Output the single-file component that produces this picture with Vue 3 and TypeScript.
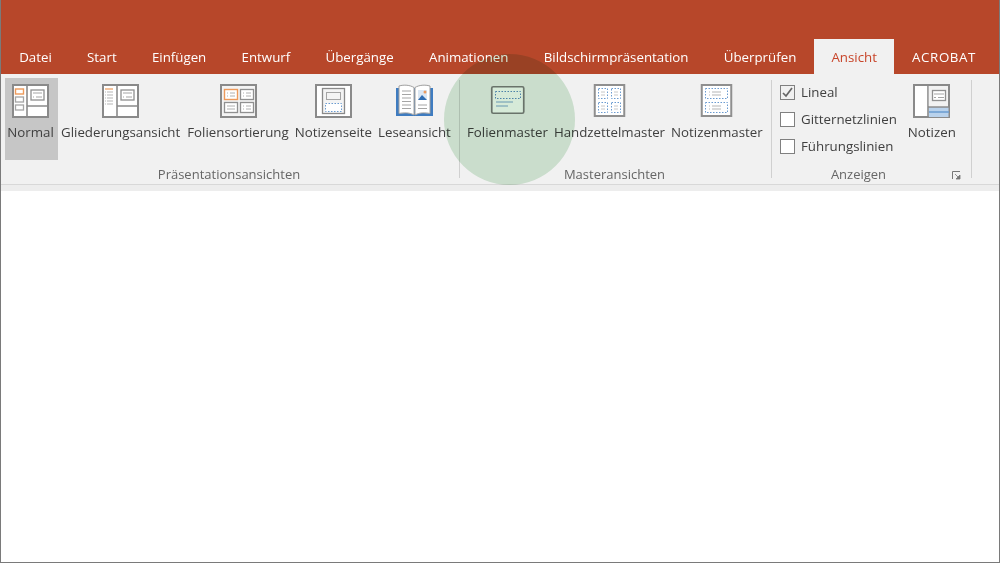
<script setup lang="ts">
const tabs = ['Datei','Start','Einfügen','Entwurf','Übergänge','Animationen','Bildschirmpräsentation','Überprüfen','Ansicht','ACROBAT']
const checks = [
  { label: 'Lineal', on: true },
  { label: 'Gitternetzlinien', on: false },
  { label: 'Führungslinien', on: false },
]
</script>

<template>
  <div class="frame">
    <header class="title">
      <nav class="tabs">
        <span v-for="t in tabs" :key="t" class="tab" :class="{ active: t === 'Ansicht', caps: t === 'ACROBAT' }">{{ t }}</span>
      </nav>
    </header>
    <section class="ribbon">
      <div class="group g1">
        <div class="body">
          <div class="btn selected">
            <svg class="icon" width="37" height="34" viewBox="0 0 37 34">
              <rect x="1" y="1" width="35" height="32" fill="#fff" stroke="#8a8a8a" stroke-width="2"/>
              <path d="M15 1v32M15 22h21" stroke="#8a8a8a" stroke-width="1.600" fill="none"/>
              <rect x="3.500" y="5" width="8" height="5" fill="#fff" stroke="#ed9a5b" stroke-width="1.400"/>
              <rect x="3.500" y="13" width="8" height="5" fill="#fff" stroke="#a5a5a5" stroke-width="1.300"/>
              <rect x="3.500" y="21" width="8" height="5" fill="#fff" stroke="#a5a5a5" stroke-width="1.300"/>
              <rect x="19" y="6" width="13" height="10" fill="#fff" stroke="#909090" stroke-width="1.300"/>
              <path d="M21 9h9M21 13h1M24 13h6" stroke="#a5a5a5"/>
            </svg>
            <span>Normal</span>
          </div>
          <div class="btn">
            <svg class="icon" width="37" height="34" viewBox="0 0 37 34">
              <rect x="1" y="1" width="35" height="32" fill="#fff" stroke="#8a8a8a" stroke-width="2"/>
              <path d="M15 1v32M15 22h21" stroke="#8a8a8a" stroke-width="1.600" fill="none"/>
              <path d="M3 5h8" stroke="#ed9a5b" stroke-width="1.200"/>
              <path d="M3 8h1M5 8h6M3 11h1M5 11h6M3 14h1M5 14h6M3 17h1M5 17h6M3 20h1M5 20h6" stroke="#b5b5b5"/>
              <rect x="19" y="6" width="13" height="10" fill="#fff" stroke="#909090" stroke-width="1.300"/>
              <path d="M21 9h9M21 13h1M24 13h6" stroke="#a5a5a5"/>
            </svg>
            <span>Gliederungsansicht</span>
          </div>
          <div class="btn shifted">
            <svg class="icon" width="37" height="34" viewBox="0 0 37 34">
              <rect x="1" y="1" width="35" height="32" fill="#f4f4f4" stroke="#8a8a8a" stroke-width="2"/>
              <rect x="4.500" y="5.500" width="13" height="10" fill="#fff" stroke="#ed9a5b" stroke-width="1.400"/>
              <rect x="20.500" y="5.500" width="13" height="10" fill="#fff" stroke="#909090" stroke-width="1.300"/>
              <rect x="4.500" y="18.500" width="13" height="10" fill="#fff" stroke="#909090" stroke-width="1.300"/>
              <rect x="20.500" y="18.500" width="13" height="10" fill="#fff" stroke="#909090" stroke-width="1.300"/>
              <path d="M7 9h1M10 9h5M7 12h1M10 12h5M23 9h1M26 9h5M23 12h1M26 12h5M7 22h8M7 25h8M23 22h1M26 22h5M23 25h1M26 25h5" stroke="#b0b0b0"/>
            </svg>
            <span>Foliensortierung</span>
          </div>
          <div class="btn">
            <svg class="icon" width="37" height="34" viewBox="0 0 37 34">
              <rect x="1" y="1" width="35" height="32" fill="#fff" stroke="#8a8a8a" stroke-width="2"/>
              <rect x="7.500" y="4.500" width="22" height="25" fill="#f4f4f4" stroke="#8a8a8a" stroke-width="1.300"/>
              <rect x="11.500" y="8.500" width="14" height="7" fill="#f4f4f4" stroke="#a5a5a5"/>
              <rect x="10.500" y="19.500" width="16" height="8" fill="#fff" stroke="#6a9bd0" stroke-dasharray="1.500 1.500"/>
            </svg>
            <span>Notizenseite</span>
          </div>
          <div class="btn">
            <svg class="icon" width="37" height="34" viewBox="0 0 37 34">
              <path d="M0 4h37v28H0z" fill="#3f7cc0"/>
              <path d="M3 2c5-1.500 11-1 15 1.500V31C14 28.500 8 28.500 3 29.500z" fill="#fff" stroke="#a0a0a0"/>
              <path d="M34 2c-5-1.500-11-1-15 1.500V31c4-2.500 10-2.500 15-1.500z" fill="#fff" stroke="#a0a0a0"/>
              <path d="M6 7h9M6 10.500h9M6 14h9M6 17.500h9M6 21h9M6 24.500h9M22 21h9M22 24.500h9" stroke="#a5a5a5"/>
              <rect x="22" y="6" width="9" height="10" fill="#dbe7f3"/>
              <path d="M22 16l4-5 5 5z" fill="#2f6db3"/>
              <circle cx="29" cy="8" r="1.500" fill="#ed9a5b"/>
            </svg>
            <span>Leseansicht</span>
          </div>
        </div>
        <div class="label">Präsentationsansichten</div>
      </div>
      <div class="sep"></div>

      <div class="group g2">
        <div class="body">
          <div class="btn">
            <svg class="icon" width="37" height="34" viewBox="0 0 37 34">
              <rect x="2.750" y="2.750" width="32" height="26.500" rx="1.500" fill="#fff" stroke="#7d7d7d" stroke-width="1.700"/>
              <rect x="6.500" y="7.500" width="25" height="7" fill="none" stroke="#5b8fc7" stroke-dasharray="1.500 1.500"/>
              <path d="M7 18h17M7 22h12" stroke="#7aa6d2"/>
            </svg>
            <span>Folienmaster</span>
          </div>
          <div class="btn">
            <svg class="icon" width="37" height="34" viewBox="0 0 37 34">
              <rect x="3.750" y="1" width="29.500" height="31" fill="#fff" stroke="#8f8f8f" stroke-width="2"/>
              <g fill="none" stroke="#6a9bd0" stroke-dasharray="1.500 1.500">
                <rect x="7.500" y="4.500" width="9" height="10"/>
                <rect x="20.500" y="4.500" width="9" height="10"/>
                <rect x="7.500" y="18.500" width="9" height="10"/>
                <rect x="20.500" y="18.500" width="9" height="10"/>
              </g>
              <path d="M10 8h4M10 11h4M23 8h4M23 11h4M10 22h4M10 25h4M23 22h4M23 25h4" stroke="#c8c8c8"/>
            </svg>
            <span>Handzettelmaster</span>
          </div>
          <div class="btn">
            <svg class="icon" width="37" height="34" viewBox="0 0 37 34">
              <rect x="3.750" y="1" width="29.500" height="31" fill="#fff" stroke="#8f8f8f" stroke-width="2"/>
              <g fill="none" stroke="#6a9bd0" stroke-dasharray="1.500 1.500">
                <rect x="7.500" y="4.500" width="22" height="10"/>
                <rect x="7.500" y="18.500" width="22" height="10"/>
              </g>
              <path d="M11 8h1M14 8h9M11 11h1M14 11h9M11 22h1M14 22h9M11 25h1M14 25h9" stroke="#b5b5b5"/>
            </svg>
            <span>Notizenmaster</span>
          </div>
        </div>
        <div class="label">Masteransichten</div>
      </div>
      <div class="sep"></div>

      <div class="group g3">
        <div class="body">
          <div class="checks">
            <label v-for="c in checks" :key="c.label" class="check">
              <span class="box">
                <svg v-if="c.on" width="13" height="13" viewBox="0 0 13 13"><path d="M2 7l3 3 6-8" fill="none" stroke="#666" stroke-width="1.700"/></svg>
              </span>
              {{ c.label }}
            </label>
          </div>
          <div class="btn notes">
            <svg class="icon" width="37" height="34" viewBox="0 0 37 34">
              <rect x="1" y="1" width="35" height="32" fill="#fff" stroke="#8a8a8a" stroke-width="2"/>
              <rect x="15.500" y="23" width="20" height="10" fill="#b9d2ec"/>
              <path d="M15 1v32M15 23h21" stroke="#8a8a8a" stroke-width="1.600"/>
              <path d="M16 28h20" stroke="#6a9bd0" stroke-width="1.500"/>
              <rect x="15.800" y="2" width="19.200" height="20" fill="#f2f2f2"/>
              <rect x="19.500" y="6.500" width="13" height="10" fill="#fff" stroke="#909090" stroke-width="1.300"/>
              <path d="M21 10h10M21 13.500h2M25 13.500h6" stroke="#a5a5a5"/>
            </svg>
            <span>Notizen</span>
          </div>
        </div>
        <div class="label">Anzeigen</div>
        <svg class="launcher" width="9" height="9" viewBox="0 0 9 9">
          <path d="M.5 8V.5H8" fill="none" stroke="#777"/>
          <path d="M3 3l4 4M8 4v4H4z" stroke="#777" fill="#777" stroke-width=".8"/>
        </svg>
      </div>
      <div class="sep"></div>
    </section>
    <div class="strip"></div>
    <main class="canvas"></main>
    <div class="spot"></div>
  </div>
</template>

<style>
html, body { margin: 0; background: #fff; }
</style>

<style scoped>
.frame {
  position: relative;
  width: 1000px;
  height: 563px;
  box-sizing: border-box;
  border: 1px solid #7a7a7a;
  border-top: 0;
  display: flex;
  flex-direction: column;
  overflow: hidden;
  font-family: "Open Sans", "Noto Sans", sans-serif;
  font-size: 13.300px;
  color: #404040;
  background: #fff;
}
.title {
  height: 74px;
  background: #b7472a;
  display: flex;
  align-items: flex-end;
  flex: none;
}
.tabs { display: flex; height: 35px; padding-left: .5px; }
.tab {
  padding: 0 17.650px;
  line-height: 36px;
  color: #fff;
  white-space: nowrap;
}
.tab.active {
  background: #f1f1f1;
  color: #c8452a;
  padding: 0 17.500px;
}
.tab.caps { letter-spacing: .6px; }
.ribbon {
  height: 110px;
  flex: none;
  background: #f1f1f1;
  display: flex;
  align-items: stretch;
  padding-top: 4px;
  box-sizing: border-box;
}
.group {
  position: relative;
  display: flex;
  flex-direction: column;
  box-sizing: border-box;
  flex: none;
}
.sep {
  width: 1px;
  flex: none;
  background: #d0d0d0;
  margin: 2px 0 6px;
}
.g1 { width: 458px; padding-left: 4px; }
.g2 { width: 311px; padding-left: 4px; }
.g3 { width: 199px; padding-left: 8px; }
.body { display: flex; height: 82px; flex: none; }
.btn {
  display: flex;
  flex-direction: column;
  align-items: center;
  padding: 6px 3px 0;
  box-sizing: border-box;
  white-space: nowrap;
}
.btn .icon { display: block; flex: none; }
.btn span { margin-top: 5px; line-height: 18px; }
.selected { background: #c6c6c6; padding: 6px 2px 0 0; width: 53px; }
.shifted { margin-left: 1px; }
.checks { display: flex; flex-direction: column; gap: 9px; padding-top: 5px; }
.check { display: flex; align-items: center; gap: 6px; height: 18px; white-space: nowrap; }
.box {
  width: 15px;
  height: 15px;
  box-sizing: border-box;
  border: 1.500px solid #808080;
  background: #fff;
  display: flex;
  align-items: center;
  justify-content: center;
}
.check:first-child .box { background: #f1f1f1; }
.notes { margin-left: 8px; }
.label {
  text-align: center;
  font-size: 13px;
  color: #666;
  line-height: 18px;
  margin-top: 5px;
  flex: none;
}
.g1 .label { padding-right: 6px; }
.g2 .label { padding-right: 6px; }
.g3 .label { padding-right: 34px; }
.launcher { position: absolute; right: 10px; bottom: 4px; }
.strip {
  height: 7px;
  flex: none;
  background: #ededed;
  border-top: 1px solid #d8d8d8;
  box-sizing: border-box;
}
.canvas { flex: 1; background: #fff; }
.spot {
  position: absolute;
  left: 443px;
  top: 54px;
  width: 131px;
  height: 131px;
  border-radius: 50%;
  background: #d6ead8;
  mix-blend-mode: multiply;
  pointer-events: none;
}
</style>
